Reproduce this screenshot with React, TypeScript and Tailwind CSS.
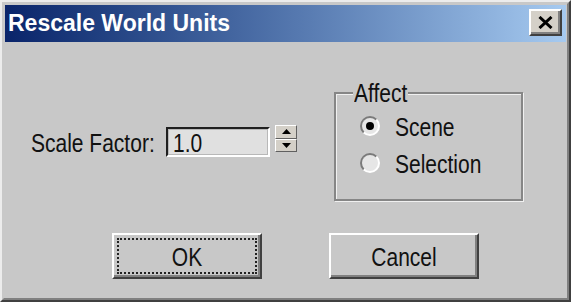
export default function App() {
  const ui = { fontFamily: '"Liberation Sans", Arial, sans-serif' }
  // the reference font is taller than it is wide, so text gets stretched a bit
  const tall = 'inline-block scale-y-[1.25] whitespace-nowrap'

  return (
    <div className="w-[571px] h-[302px] border-2 border-t-[#ececec] border-l-[#ececec] border-r-[#404040] border-b-[#404040] bg-[#c8c8c8]">
      <div className="h-full flex flex-col border-2 border-t-[#c8c8c8] border-l-[#c8c8c8] border-r-[#808080] border-b-[#808080] p-px">
        {/* Title bar */}
        <div className="h-[37px] shrink-0 flex items-center justify-between pl-[3px] pr-[4px] bg-gradient-to-r from-[#0a246a] to-[#a6caf0]">
          <span className="text-white font-bold text-[23px] leading-none" style={ui}>
            Rescale World Units
          </span>
          <button className="w-[33px] h-[27px] -mt-[2px] flex items-center justify-center bg-[#d4d0c8] border-2 border-t-white border-l-white border-r-[#404040] border-b-[#404040] shadow-[inset_-2px_-2px_0_#808080]">
            <svg width="15" height="13" viewBox="0 0 15 13">
              <path d="M1.5 1 L13.5 12 M13.5 1 L1.5 12" stroke="#000" strokeWidth="3" />
            </svg>
          </button>
        </div>

        {/* Body */}
        <div className="flex-1 flex flex-col text-[21px] text-[#111]" style={ui}>
          <div className="h-[159px] flex items-start">
            {/* Scale factor */}
            <div className="flex items-start mt-[83px] ml-[26px]">
              <label className="w-[135px] h-[30px] mt-[2px] flex items-center leading-none">
                <span className={tall}>Scale Factor:</span>
              </label>
              <div className="w-[104px] h-[30px] mt-[2px] flex items-center pl-[5px] bg-[#e0e0e0] border-2 border-t-[#202020] border-l-[#202020] border-r-white border-b-white shadow-[inset_0_0_0_1px_#b8b8b8] leading-none">
                <span className={tall}>1.0</span>
              </div>
              <div className="w-[22px] h-[27px] ml-[5px] flex flex-col">
                <button className="flex-1 flex items-center justify-center bg-[#d4d0c8] border border-t-white border-l-white border-r-[#606060] border-b-[#606060]">
                  <svg width="9" height="5" viewBox="0 0 9 5">
                    <path d="M0 5 L4.5 0 L9 5 Z" fill="#000" />
                  </svg>
                </button>
                <button className="flex-1 flex items-center justify-center bg-[#d4d0c8] border border-t-white border-l-white border-r-[#606060] border-b-[#606060]">
                  <svg width="9" height="5" viewBox="0 0 9 5">
                    <path d="M0 0 L9 0 L4.5 5 Z" fill="#000" />
                  </svg>
                </button>
              </div>
            </div>

            {/* Affect group */}
            <fieldset className="w-[189px] h-[119px] ml-[37px] mt-[40px] border-2 border-[#868686] shadow-[inset_1px_1px_0_#f0f0f0,1px_1px_0_#f0f0f0] px-[24px]">
              <legend className="ml-[-7px] px-[1px] h-[22px] leading-[22px] bg-[#c8c8c8]">
                <span className={tall}>Affect</span>
              </legend>
              <div className="flex flex-col gap-[7px] pt-[7px]">
                <div className="h-[30px] flex items-center">
                  <span className="w-[20px] h-[20px] rounded-full flex items-center justify-center bg-[#e6e6e6] border-2 border-t-[#7a7a7a] border-l-[#7a7a7a] border-r-white border-b-white">
                    <span className="w-[8px] h-[8px] rounded-full bg-black" />
                  </span>
                  <span className={`ml-[15px] leading-none ${tall}`}>Scene</span>
                </div>
                <div className="h-[30px] flex items-center">
                  <span className="w-[20px] h-[20px] rounded-full bg-[#e6e6e6] border-2 border-t-[#7a7a7a] border-l-[#7a7a7a] border-r-white border-b-white" />
                  <span className={`ml-[15px] leading-none ${tall}`}>Selection</span>
                </div>
              </div>
            </fieldset>
          </div>

          {/* Buttons */}
          <div className="flex mt-[32px] ml-[107px] gap-[67px]">
            <button className="w-[150px] h-[46px] flex bg-[#c8c8c8] border-2 border-t-white border-l-white border-r-[#404040] border-b-[#404040] shadow-[inset_-2px_-2px_0_#808080]">
              <span className="flex-1 m-[3px] flex items-center justify-center border-2 border-dotted border-[#222] leading-none">
                <span className={tall}>OK</span>
              </span>
            </button>
            <button className="w-[150px] h-[46px] flex items-center justify-center bg-[#c8c8c8] border-2 border-t-white border-l-white border-r-[#404040] border-b-[#404040] shadow-[inset_-2px_-2px_0_#808080] leading-none">
              <span className={tall}>Cancel</span>
            </button>
          </div>
        </div>
      </div>
    </div>
  )
}
